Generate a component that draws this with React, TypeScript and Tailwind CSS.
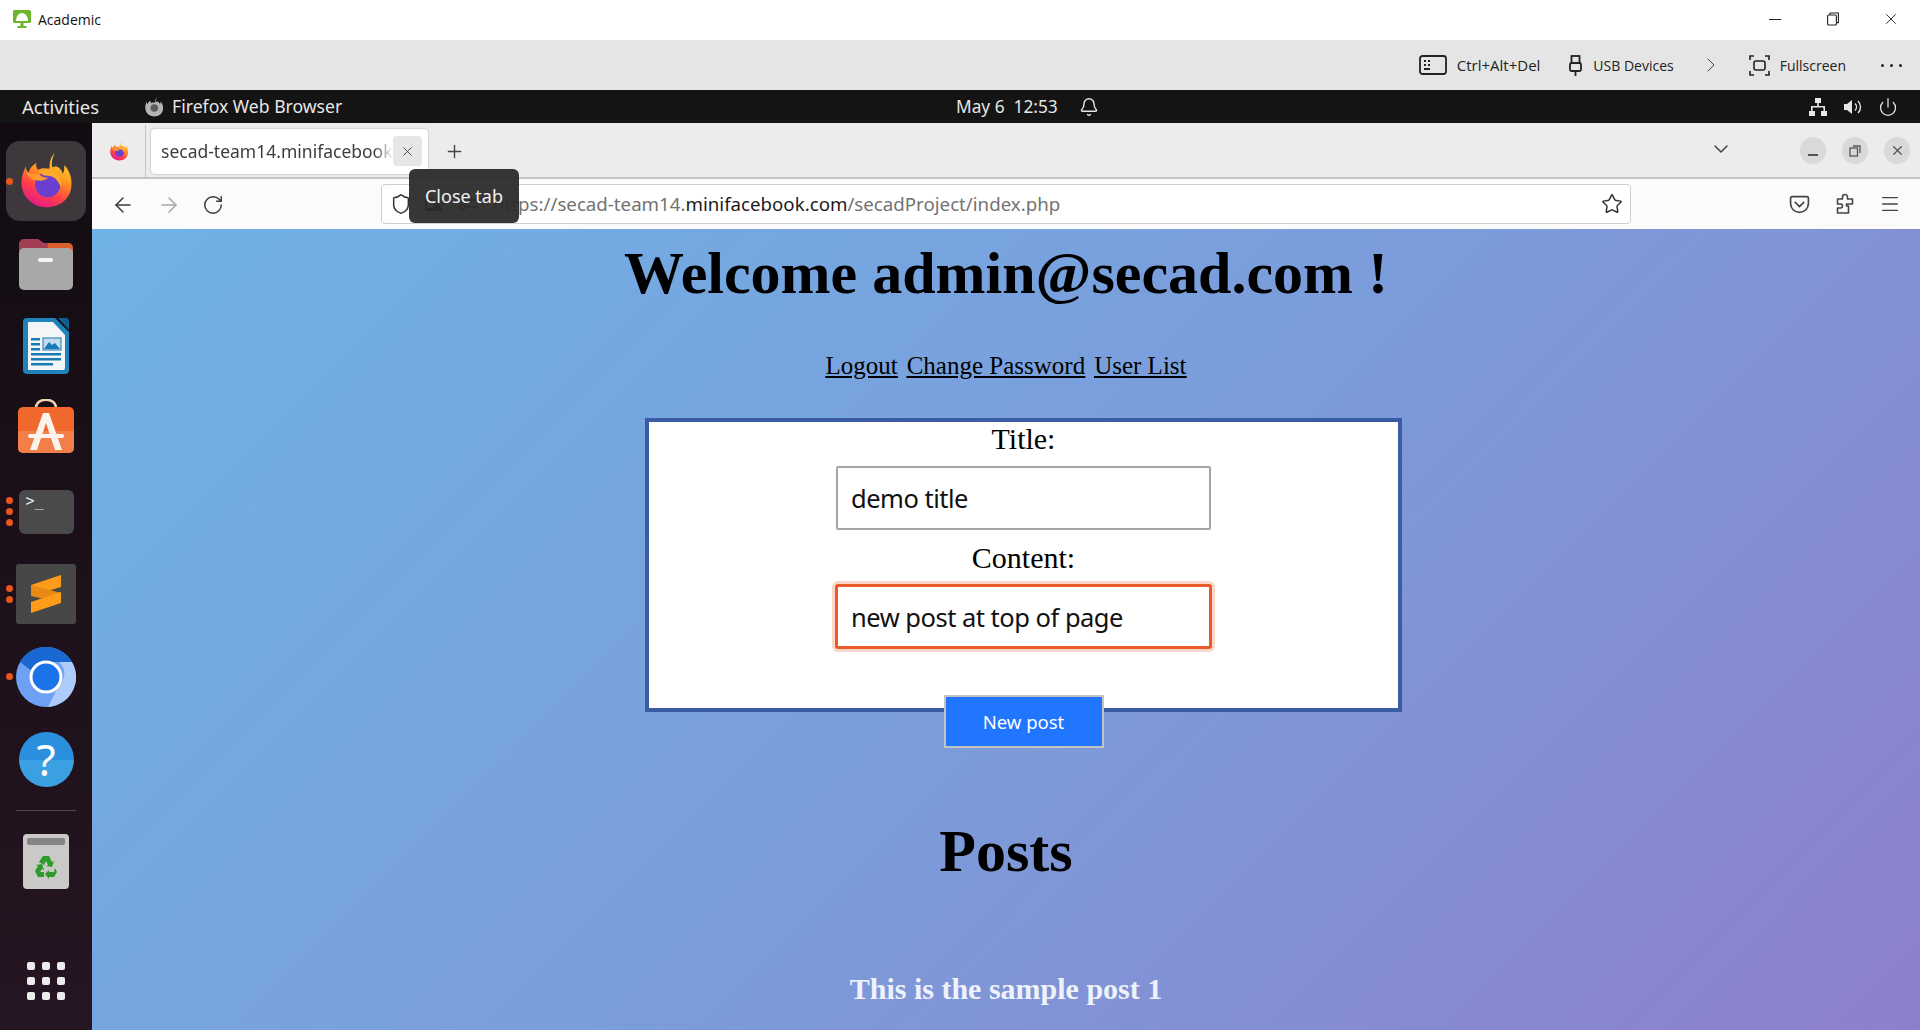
import React from "react";
import {
  ArrowLeft,
  ArrowRight,
  Bell,
  ChevronDown,
  ChevronRight,
  Menu,
  Plus,
  Power,
  RotateCw,
  Shield,
  Star,
  X,
} from "lucide-react";

const sans = "font-['Noto_Sans','Open_Sans',sans-serif]";
const win = "font-['Open_Sans','Noto_Sans',sans-serif]";
const serif = "font-['Liberation_Serif',serif]";

const FirefoxLogo = ({ size, mono = false }: { size: number; mono?: boolean }) => (
  <svg width={size} height={size} viewBox="0 0 64 64">
    <defs>
      <linearGradient id="ffOuter" x1="0.75" y1="0" x2="0.3" y2="1">
        <stop offset="0" stopColor="#ffdf33" />
        <stop offset="0.38" stopColor="#ff9a1f" />
        <stop offset="0.7" stopColor="#ff3f48" />
        <stop offset="1" stopColor="#e5198c" />
      </linearGradient>
    </defs>
    <path
      d="M42 0c-3 6-4 11-3 16 3-1 6-1 8 1 2 2 4 4 4 7 2-3 2-7 2-10 6 6 9 15 8 24-1 14-13 24-28 24C17 62 4 50 4 34c0-7 2-13 5-19 0 3 1 6 3 8 1-6 5-9 9-12-1 3 0 6 2 8 4-2 9-2 13-1 0-7 1-13 6-18z"
      fill={mono ? "#b5b5b5" : "url(#ffOuter)"}
    />
    {mono ? (
      <circle cx="33" cy="35" r="12" fill="#5d5d5d" />
    ) : (
      <>
        <circle cx="34" cy="36" r="14.5" fill="#6a3fd0" />
        <path d="M24 21c7-4 16-3 21 3 4 4 5 10 4 15-3-8-8-13-16-13-4 0-7-2-9-5z" fill="#ffa92a" />
        <path d="M9 19c3 5 8 6 15 5 3 3 7 5 11 4-5 5-13 4-19 2-3-2-6-6-7-11z" fill="#ff9a2e" />
      </>
    )}
  </svg>
);

const DockItem = ({
  dots = 0,
  active = false,
  children,
}: {
  dots?: number;
  active?: boolean;
  children: React.ReactNode;
}) => (
  <div className="relative flex h-[82.6px] w-full shrink-0 items-center justify-center">
    <div className="absolute left-[6px] top-0 flex h-full flex-col justify-center gap-[4px]">
      {Array.from({ length: dots }).map((_, i) => (
        <span key={i} className="block h-[7px] w-[7px] rounded-full bg-[#e9541f]" />
      ))}
    </div>
    <div
      className={`flex h-[80px] w-[80px] items-center justify-center rounded-[14px] ${
        active ? "bg-[#3e383c]" : ""
      }`}
    >
      {children}
    </div>
  </div>
);

const Dock = () => (
  <aside className="flex w-[92px] shrink-0 flex-col items-center bg-[linear-gradient(180deg,#120c12,#261522)] pt-[17px]">
    <DockItem dots={1} active>
      <FirefoxLogo size={56} />
    </DockItem>
    <DockItem>
      <svg width="56" height="52" viewBox="0 0 56 52">
        <path d="M1 6a5 5 0 0 1 5-5h14l6 4h24a5 5 0 0 1 5 5v14H1z" fill="#a33f55" />
        <path d="M30 5h20a5 5 0 0 1 5 5v14H30z" fill="#d9602c" />
        <path d="M1 15a5 5 0 0 1 5-5h44a5 5 0 0 1 5 5v32a5 5 0 0 1-5 5H6a5 5 0 0 1-5-5z" fill="#a8a8a8" />
        <rect x="20" y="20" width="15" height="4" rx="2" fill="#f4f4f4" />
      </svg>
    </DockItem>
    <DockItem>
      <svg width="46" height="56" viewBox="0 0 46 56">
        <path d="M4 0h28l14 14v38a4 4 0 0 1-4 4H4a4 4 0 0 1-4-4V4a4 4 0 0 1 4-4z" fill="#1f82b8" />
        <path d="M5 4h25l12 13v33a2 2 0 0 1-2 2H5z" fill="#f3f5f7" />
        <path d="M35 0h8a3 3 0 0 1 3 3v9z" fill="#0f5f8f" />
        <g fill="#1a7ab5">
          <rect x="8" y="20" width="9" height="2.5" />
          <rect x="8" y="25" width="9" height="2.5" />
          <rect x="8" y="30" width="9" height="2.5" />
          <rect x="8" y="35" width="30" height="2.5" />
          <rect x="8" y="40" width="30" height="2.5" />
          <rect x="8" y="45" width="22" height="2.5" />
          <rect x="20" y="20" width="18" height="12" fill="#c4dcee" stroke="#1a7ab5" />
          <path d="M21 31l5-7 3 3 3-2 5 6z" />
        </g>
      </svg>
    </DockItem>
    <DockItem>
      <svg className="-mt-[7px]" width="56" height="54" viewBox="0 0 56 54">
        <path d="M18 9c0-11 20-11 20 0" fill="none" stroke="#f3d3ad" strokeWidth="2.5" />
        <rect x="0" y="8" width="56" height="46" rx="5" fill="#f0682c" />
        <path d="M0 32h56v17a5 5 0 0 1-5 5H5a5 5 0 0 1-5-5z" fill="#f17f47" />
        <path d="M25 14h6l13 37h-7l-9-27-9 27h-7z" fill="#fbf3ec" />
        <rect x="10" y="35" width="36" height="4" rx="2" fill="#fbf3ec" />
      </svg>
    </DockItem>
    <DockItem dots={3}>
      <div className="flex h-[44px] w-[55px] rounded-[6px] bg-[#4a4a4a] pl-[7px] pt-[2px]">
        <span className="font-['DejaVu_Sans_Mono',monospace] text-[15px] leading-[18px] text-[#e4e4e4]">
          &gt;_
        </span>
      </div>
    </DockItem>
    <DockItem dots={2}>
      <div className="flex h-[60px] w-[60px] items-center justify-center rounded-[3px] bg-[#474747]">
        <svg width="30" height="38" viewBox="0 0 30 38">
          <path d="M30 0v12L0 21V10z" fill="#ff9c1a" />
          <path d="M0 10l30 8v10L0 21z" fill="#e88a14" />
          <path d="M30 17v11L0 38V27z" fill="#ff9c1a" />
        </svg>
      </div>
    </DockItem>
    <DockItem dots={1}>
      <svg width="60" height="60" viewBox="0 0 60 60">
        <circle cx="30" cy="30" r="30" fill="#6ea0f6" />
        <path d="M4 15A30 30 0 0 1 56 15H30a15 15 0 0 0-14 9z" fill="#1967d2" />
        <path d="M56 15a30 30 0 0 1-24 45l11-22a15 15 0 0 0 0-23z" fill="#aecbfa" />
        <circle cx="30" cy="30" r="15" fill="#1a73e8" stroke="#ffffff" strokeWidth="3" />
      </svg>
    </DockItem>
    <DockItem>
      <div
        className={`flex h-[55px] w-[55px] items-center justify-center rounded-full bg-[linear-gradient(180deg,#2a8fdc_50%,#3aa0e2_50%)] ${sans} text-[44px] font-normal leading-none text-white`}
      >
        ?
      </div>
    </DockItem>
    <div className="mt-[9px] mb-[9px] h-px w-[60px] shrink-0 bg-[#55494f]" />
    <DockItem>
      <div className="flex h-[55px] w-[46px] flex-col items-center rounded-[4px] bg-[#c9c9c7] pt-[4px]">
        <span className="block h-[7px] w-[38px] rounded-[2px] bg-[#848484]" />
        <svg className="mt-[10px]" width="24" height="24" viewBox="0 0 24 24" fill="#2e9a2a">
          <path d="M9 1h6l3 6 2-1-2 6-6-1 2-1-2-4-2 4-5-3zM4 11l-3 5 3 6h6v-5H6l2-3 2 1-2-6-6 1zM21 13l2 4-3 5h-5v2l-4-5 4-4v2h5z" />
        </svg>
      </div>
    </DockItem>
    <div className="mb-[30px] mt-auto grid grid-cols-3 gap-[7px]">
      {Array.from({ length: 9 }).map((_, i) => (
        <span key={i} className="block h-[8px] w-[8px] rounded-[2px] bg-[#ececec]" />
      ))}
    </div>
  </aside>
);

const RoundButton = ({ children }: { children: React.ReactNode }) => (
  <span className="flex h-[27px] w-[26px] items-center justify-center rounded-full bg-[#d9d9d9]">
    {children}
  </span>
);

const TabBar = () => (
  <div className="relative flex h-[56px] shrink-0 items-center border-b-2 border-[#c4c4c4] bg-[#ececec] pt-[2px]">
    <div className="flex h-full w-[54px] items-center justify-center border-r border-[#c4c4c4]">
      <FirefoxLogo size={20} />
    </div>
    <div className="ml-[5px] flex h-[45px] w-[277px] items-center rounded-[4px] bg-white pl-[10px] pr-[6px] shadow-[0_0_2px_rgba(0,0,0,0.35)]">
      <span
        className={`${sans} min-w-0 flex-1 overflow-hidden whitespace-nowrap pt-[1px] text-[17.5px] text-[#3d3d3d] [mask-image:linear-gradient(to_right,black_92%,transparent)]`}
      >
        secad-team14.minifacebook.com
      </span>
      <span className="flex h-[30px] w-[29px] items-center justify-center rounded-[4px] bg-[#e6e6e6]">
        <X size={15} strokeWidth={1.5} className="text-[#444]" />
      </span>
    </div>
    <Plus size={21} strokeWidth={1.6} className="ml-[16px] text-[#444]" />
    <ChevronDown size={24} strokeWidth={1.5} className="ml-auto mr-[67px] -mt-[4px] text-[#444]" />
    <div className="mr-[10px] -mt-[1px] flex items-center gap-[16px]">
      <RoundButton>
        <span className="mt-[8px] block h-[2px] w-[10px] bg-[#555]" />
      </RoundButton>
      <RoundButton>
        <svg width="12" height="12" viewBox="0 0 12 12" fill="none" stroke="#555" strokeWidth="1.3">
          <rect x="1" y="3" width="7.5" height="8" />
          <path d="M4 1h7v7" />
        </svg>
      </RoundButton>
      <RoundButton>
        <X size={15} strokeWidth={2} className="text-[#555]" />
      </RoundButton>
    </div>
  </div>
);

const NavBar = () => (
  <div className="flex h-[50px] shrink-0 items-center bg-[#fbfbfb]">
    <div className="ml-[19px] mt-[1px] flex items-center gap-[21.5px]">
      <ArrowLeft size={24} strokeWidth={1.5} className="text-[#3a3a3a]" />
      <ArrowRight size={24} strokeWidth={1.5} className="text-[#a8a8a8]" />
      <RotateCw size={22} strokeWidth={1.6} className="text-[#3a3a3a]" />
    </div>
    <div className="ml-[157px] flex h-[40px] w-[1250px] items-center rounded-[4px] border border-[#cfcfcf] bg-white pl-[8px] pr-[7px]">
      <Shield size={22} strokeWidth={1.6} className="text-[#333]" />
      <span className="ml-[10px] flex items-center gap-[14px] text-[#333]">
        <svg width="22" height="18" viewBox="0 0 22 18" fill="#333">
          <path d="M3 3h8v3H5v7h5v3H3z" />
          <path d="M15 5l6 11H9z" />
        </svg>
        <svg width="20" height="18" viewBox="0 0 20 18" fill="none" stroke="#333" strokeWidth="1.6">
          <circle cx="5" cy="12" r="2.5" />
          <path d="M8 12h11M8 5h11" />
          <circle cx="4" cy="5" r="1" fill="#333" />
        </svg>
      </span>
      <span className={`${sans} ml-[15px] whitespace-nowrap text-[18.7px] text-[#737373]`}>
        https://secad-team14.<span className="text-[#1c1c1c]">minifacebook.com</span>/secadProject/index.php
      </span>
      <Star size={22} strokeWidth={1.6} className="ml-auto text-[#333]" />
    </div>
    <div className="ml-auto mr-[19px] flex items-center gap-[24px] text-[#444]">
      <svg width="21" height="21" viewBox="0 0 20 20" fill="none" stroke="#444" strokeWidth="1.6">
        <path d="M3 2.5h14a1.5 1.5 0 0 1 1.5 1.5v5a8.5 8.5 0 0 1-17 0V4A1.5 1.5 0 0 1 3 2.5z" />
        <path d="M6 8l4 4 4-4" strokeLinecap="round" />
      </svg>
      <svg width="21" height="22" viewBox="0 0 20 22" fill="none" stroke="#444" strokeWidth="1.6">
        <path d="M8 4a2.5 2.5 0 0 1 5 0v2h5v5h-6v2h2v7H3v-5h3a2 2 0 0 0 0-4H3V6h5z" strokeLinejoin="round" />
      </svg>
      <Menu size={22} strokeWidth={1.5} />
    </div>
  </div>
);

const Tooltip = () => (
  <div
    className={`absolute left-[317px] top-[46px] flex h-[54px] w-[110px] items-center justify-center rounded-[6px] bg-[#2b2b2b]/95 ${sans} text-[18px] text-[#f2f2f2]`}
  >
    Close tab
  </div>
);

const Page = () => (
  <main
    className={`flex min-h-0 flex-1 flex-col items-center overflow-hidden bg-[linear-gradient(135deg,#6fb2e6_0%,#7b9ddb_50%,#8d7fcb_100%)] pt-[11px] ${serif} text-black`}
  >
    <h1 className="text-[60px] font-bold leading-[66px]">Welcome admin@secad.com !</h1>
    <nav className="mt-[43px] flex gap-[9px] text-[25px] leading-[34px] underline">
      <a>Logout</a>
      <a>Change Password</a>
      <a>User List</a>
    </nav>
    <form className="ml-[35px] mt-[35px] flex h-[294px] w-[757px] flex-col items-center border-4 border-[#3a5ca4] bg-white">
      <label className="text-[30px] leading-[34px]">Title:</label>
      <input
        readOnly
        value="demo title"
        className={`${sans} mt-[10px] h-[64px] w-[375px] rounded-[2px] border-2 border-[#a5a5a5] bg-white px-[13px] text-[25.5px] tracking-[-0.5px] text-[#111] outline-none`}
      />
      <label className="mt-[11px] text-[30px] leading-[34px]">Content:</label>
      <input
        readOnly
        value="new post at top of page"
        className={`${sans} mt-[9px] h-[65px] w-[377px] rounded-[3px] border-[3px] border-[#ea5a28] bg-white px-[13px] text-[25.5px] tracking-[-0.5px] text-[#111] shadow-[0_0_0_3px_#fbd6ca] outline-none`}
      />
    </form>
    <button
      type="button"
      className={`${sans} relative ml-[35px] -mt-[17px] h-[53px] w-[160px] border-2 border-[#c3c3c3] bg-[#2176ff] text-[18.5px] text-white`}
    >
      New post
    </button>
    <h2 className="mt-[70px] text-[60px] font-bold leading-[66px]">Posts</h2>
    <p className="mt-[88px] text-[30px] font-bold leading-[34px] text-[#eef2fb]">
      This is the sample post 1
    </p>
  </main>
);

export default function App() {
  return (
    <div className="flex h-screen w-full flex-col overflow-hidden bg-white">
      <header className={`flex h-[40px] shrink-0 items-center bg-white pb-[2px] ${win}`}>
        <svg className="ml-[12px]" width="20" height="20" viewBox="0 0 20 20">
          <rect x="1" y="1" width="18" height="13" rx="1.5" fill="#6cb52d" />
          <path d="M4 12c0-5 3-8 6-8s6 3 6 8z" fill="#ffffff" />
          <rect x="8.5" y="14" width="3" height="3" fill="#6cb52d" />
          <rect x="5.5" y="17" width="9" height="2" fill="#6cb52d" />
        </svg>
        <span className="ml-[6px] text-[14px] text-[#111]">Academic</span>
        <div className="ml-auto mr-[20px] flex items-center text-[#222]">
          <span className="mr-[46px] block h-px w-[12px] bg-[#222]" />
          <svg className="mr-[43px]" width="12" height="14" viewBox="0 0 12 14" fill="none" stroke="#222" strokeWidth="1.1">
            <rect x="0.6" y="3" width="8.8" height="10" rx="1" />
            <path d="M3 3V1h8.4v9.6H9.4" />
          </svg>
          <X size={18} strokeWidth={1.2} />
        </div>
      </header>

      <div className={`flex h-[50px] shrink-0 items-center justify-end bg-[#e5e5e5] ${win} text-[14px] text-[#222]`}>
        <svg width="28" height="20" viewBox="0 0 28 20" fill="none" stroke="#222" strokeWidth="1.8">
          <rect x="1" y="1" width="26" height="18" rx="2.5" />
          <g fill="#222" stroke="none">
            <rect x="5" y="5" width="2" height="2" />
            <rect x="9" y="5" width="2" height="2" />
            <rect x="5" y="9" width="2" height="2" />
            <rect x="9" y="9" width="2" height="2" />
            <rect x="5" y="13" width="6" height="2" />
          </g>
        </svg>
        <span className="ml-[10px] text-[15px]">Ctrl+Alt+Del</span>
        <svg className="ml-[29px]" width="13" height="21" viewBox="0 0 13 21" fill="none" stroke="#222" strokeWidth="1.8">
          <rect x="2.5" y="1" width="8" height="7" />
          <rect x="1" y="8" width="11" height="8" rx="1.5" />
          <path d="M6.5 16v5" />
          <path d="M5 4h0M8 4h0" />
        </svg>
        <span className="ml-[11px]">USB Devices</span>
        <ChevronRight size={24} strokeWidth={1} className="ml-[25px] text-[#444]" />
        <svg className="ml-[26px]" width="21" height="21" viewBox="0 0 21 21" fill="none" stroke="#222" strokeWidth="1.6">
          <path d="M1 5V1h4M16 1h4v4M1 16v4h4M20 16v4h-4" />
          <rect x="5" y="6" width="11" height="9" rx="2" />
        </svg>
        <span className="ml-[10px]">Fullscreen</span>
        <span className="ml-[35px] mr-[18px] flex gap-[6px]">
          <i className="block h-[3px] w-[3px] rounded-full bg-[#222]" />
          <i className="block h-[3px] w-[3px] rounded-full bg-[#222]" />
          <i className="block h-[3px] w-[3px] rounded-full bg-[#222]" />
        </span>
      </div>

      <div className={`relative flex h-[33px] shrink-0 items-center bg-[#141414] ${sans} text-[17.6px] text-[#e6e6e6]`}>
        <span className="ml-[22px] text-[18.5px]">Activities</span>
        <span className="ml-[45px]">
          <FirefoxLogo size={20} mono />
        </span>
        <span className="ml-[8px]">Firefox Web Browser</span>
        <span className="absolute left-[956px] flex items-center text-[17.3px]">
          May 6&nbsp;&nbsp;12:53
          <Bell size={20} strokeWidth={1.7} className="ml-[21px]" />
        </span>
        <div className="ml-auto mr-[22px] flex items-center gap-[15px]">
          <svg width="20" height="20" viewBox="0 0 20 20" fill="#e6e6e6">
            <rect x="7" y="1" width="6" height="5" />
            <rect x="1" y="14" width="6" height="5" />
            <rect x="13" y="14" width="6" height="5" />
            <path d="M9.2 6h1.6v3H17v5h-1.6v-3.4H4.6V14H3V9h6.2z" />
          </svg>
          <svg width="20" height="20" viewBox="0 0 20 20" fill="none" stroke="#e6e6e6" strokeWidth="1.4">
            <path d="M1 7h3l5-4v14l-5-4H1z" fill="#e6e6e6" stroke="none" />
            <path d="M12 6.5a5 5 0 0 1 0 7M15 4a8.5 8.5 0 0 1 0 12" />
          </svg>
          <Power size={20} strokeWidth={1.5} />
        </div>
      </div>

      <div className="flex min-h-0 flex-1">
        <Dock />
        <div className="relative flex min-w-0 flex-1 flex-col">
          <TabBar />
          <NavBar />
          <Page />
          <Tooltip />
        </div>
      </div>
    </div>
  );
}
